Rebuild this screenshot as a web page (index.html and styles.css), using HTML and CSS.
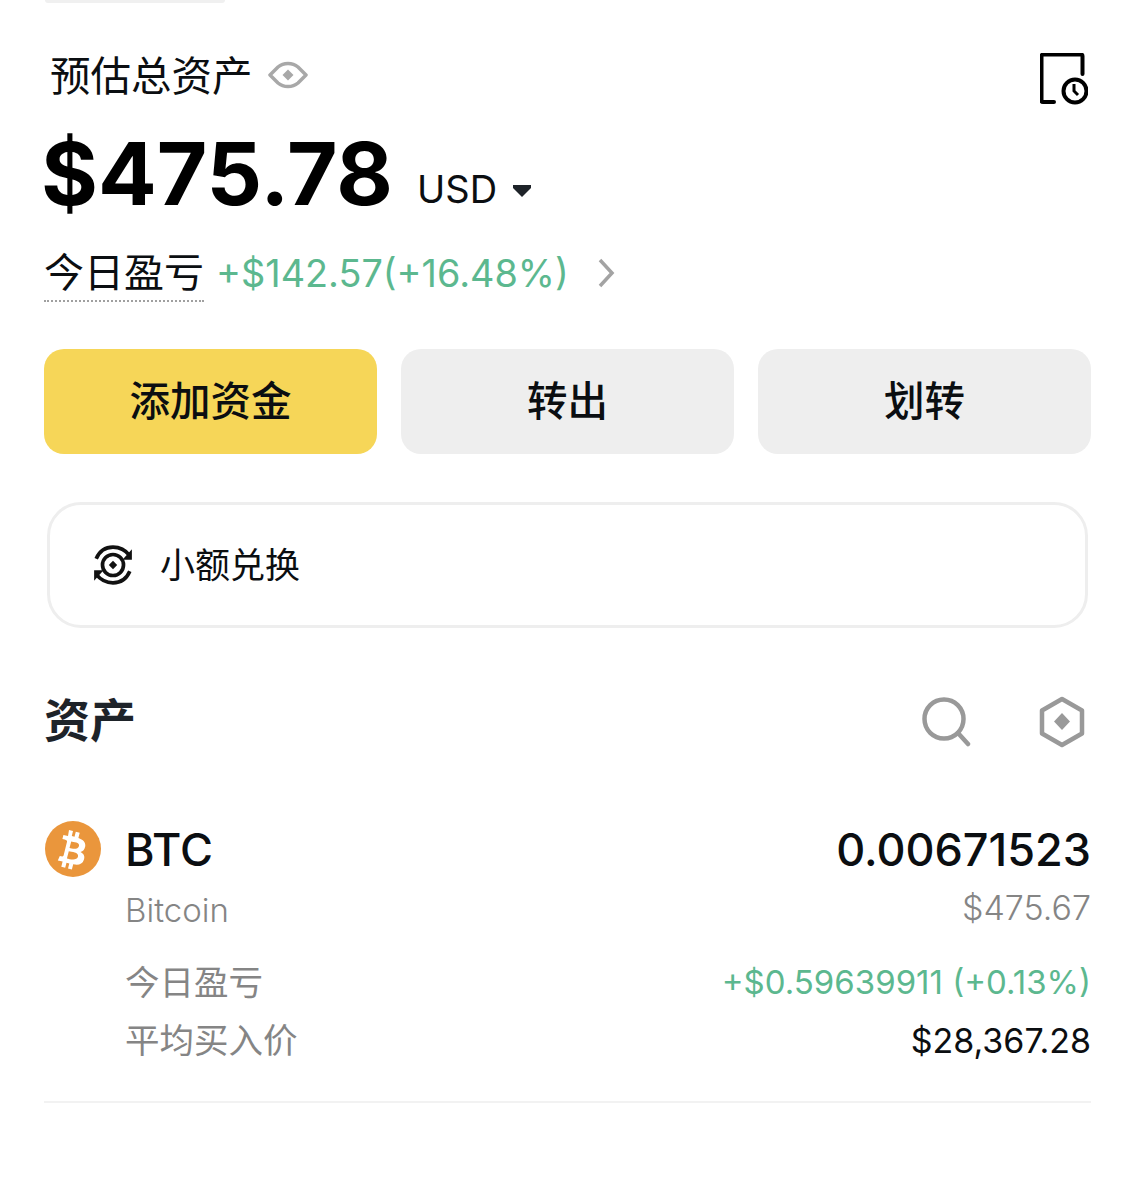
FILE: index.html
```html
<!DOCTYPE html>
<html lang="zh-CN">
<head>
    <meta charset="UTF-8">
    <title>资产</title>
    <link rel="stylesheet" href="styles.css">
</head>
<body>
    <div class="top-sliver"></div>
    <div class="total-head">
        <div class="total-label">
            <span>预估总资产</span>
            <svg class="eye" viewBox="0 0 40 28" width="40" height="28">
                <path d="M2 14 L10 6 C13 3.500 16 2.500 20 2.500 C24 2.500 27 3.500 30 6 L38 14 L30 22 C27 24.500 24 25.500 20 25.500 C16 25.500 13 24.500 10 22 Z" fill="none" stroke="#a8a8a8" stroke-width="3.500" stroke-linejoin="round"/>
                <path d="M20 8.500 L25.500 14 L20 19.500 L14.500 14 Z" fill="#a8a8a8"/>
            </svg>
        </div>
        <svg class="history" viewBox="0 0 48 52" width="48" height="52">
            <path d="M14 49 H3 a1.500 1.500 0 0 1 -1.500 -1.500 V3 a1.500 1.500 0 0 1 1.500 -1.500 H41 a1.500 1.500 0 0 1 1.500 1.500 V21" fill="none" stroke="#000" stroke-width="4" stroke-linecap="round"/>
            <circle cx="35" cy="38" r="11.500" fill="none" stroke="#000" stroke-width="4"/>
            <path d="M34 31 V38 L38 42" fill="none" stroke="#000" stroke-width="3"/>
        </svg>
    </div>
    <div class="amount-row">
        <span class="amount">$475.78</span>
        <span class="currency">USD</span>
        <svg class="caret" viewBox="0 0 20 14" width="20" height="14"><path d="M1 1 H19 V4 L10 13 L1 4 Z" fill="#1e2329"/></svg>
    </div>
    <div class="pnl-row">
        <span class="pnl-label">今日盈亏</span>
        <span class="pnl-value">+$142.57(+16.48%)</span>
        <svg class="chevron" viewBox="0 0 18 30" width="18" height="30"><path d="M3 2 L15 15 L3 28" fill="none" stroke="#a3a3a3" stroke-width="3.500"/></svg>
    </div>
    <div class="actions">
        <div class="btn btn-primary">添加资金</div>
        <div class="btn">转出</div>
        <div class="btn">划转</div>
    </div>
    <div class="swap-card">
        <svg class="swap-icon" viewBox="0 0 40 40" width="42" height="42">
            <path d="M4 14 C7 7 13 3 20 3 C27 3 32 6 36 11" fill="none" stroke="#111" stroke-width="3.500"/>
            <path d="M36 26 C33 33 27 37 20 37 C13 37 8 34 4 29" fill="none" stroke="#111" stroke-width="3.500"/>
            <path d="M38 5 V15 H29 Z" fill="#111"/>
            <path d="M2 35 V25 H11 Z" fill="#111"/>
            <circle cx="20" cy="20" r="10" fill="none" stroke="#111" stroke-width="3.500"/>
            <path d="M20 16 L24 20 L20 24 L16 20 Z" fill="#111"/>
        </svg>
        <span>小额兑换</span>
    </div>
    <div class="assets-head">
        <h2>资产</h2>
        <div class="assets-tools">
            <svg viewBox="0 0 50 50" width="50" height="50">
                <circle cx="22" cy="22" r="19.500" fill="none" stroke="#999" stroke-width="4.500"/>
                <path d="M36 36 L46 47" stroke="#999" stroke-width="4.500" stroke-linecap="round"/>
            </svg>
            <svg viewBox="0 0 48 52" width="48" height="52">
                <path d="M24 3 L44 14.500 V37.500 L24 49 L4 37.500 V14.500 Z" fill="none" stroke="#999" stroke-width="4.500" stroke-linejoin="round"/>
                <path d="M24 17 L32 25.500 L24 34 L16 25.500 Z" fill="#999"/>
            </svg>
        </div>
    </div>
    <div class="coin">
        <svg class="coin-logo" viewBox="0 0 56 56" width="56" height="56">
            <circle cx="28" cy="28" r="28" fill="#ea963c"/>
            <path fill="#fff" fill-rule="evenodd" d="M24 9 L28 10 L26.800 15 L29.500 15.700 L30.800 10.700 L34.700 11.700 L33.400 16.900 C38 18.600 41 21.200 40.200 25.600 C39.600 28.800 38 30.400 35.500 31 C38.800 32.800 40.200 35.400 38.800 39 C37.200 43.600 33.400 44.200 28.200 43.300 L26.900 48.400 L23 47.400 L24.300 42.400 L21.500 41.700 L20.200 46.800 L16.300 45.800 L17.600 40.600 L12.800 39.400 L14.800 35 C16.800 35.600 18 35.900 18.600 34.500 L22 20.800 C22.200 19.600 21.700 19 19.600 18.500 L17.400 17.900 L18.400 14 L23 15.100 Z M26.200 20.500 L24.500 27 C26.800 27.600 33 29.200 34 25 C35 21 28.500 21.100 26.200 20.500 Z M23.800 30.200 L21.900 37.400 C24.700 38.100 32 40 33 35.500 C34 31 26.600 30.900 23.800 30.200 Z"/>
        </svg>
        <div class="coin-body">
            <div class="coin-row coin-main">
                <span class="coin-symbol">BTC</span>
                <span class="coin-qty">0.00671523</span>
            </div>
            <div class="coin-row coin-sub">
                <span>Bitcoin</span>
                <span class="coin-usd">$475.67</span>
            </div>
            <div class="coin-row coin-stat coin-stat-first">
                <span class="stat-label">今日盈亏</span>
                <span class="stat-value green">+$0.59639911 (+0.13%)</span>
            </div>
            <div class="coin-row coin-stat">
                <span class="stat-label">平均买入价</span>
                <span class="stat-value">$28,367.28</span>
            </div>
        </div>
    </div>
    <div class="divider"></div>
</body>
</html>
```

FILE: styles.css
```css
:root {
    --text: #0b0e11;
    --grey: #858585;
    --green: #5cb88f;
    --line: #eeeeee;
}
html, body {
    margin: 0;
    padding: 0;
    background: #fff;
}
body {
    padding: 0 44px;
    height: 1200px;
    box-sizing: border-box;
    overflow: hidden;
    color: var(--text);
    font-family: Inter, "Noto Sans CJK SC", sans-serif;
}
.top-sliver {
    width: 180px;
    height: 3px;
    margin-left: 1px;
    background: #f0f0f0;
    border-radius: 0 0 14px 14px;
}
.total-head {
    display: flex;
    justify-content: space-between;
    padding: 50px 0 0 6px;
    height: 52px;
}
.total-label {
    display: flex;
    align-items: center;
    gap: 15px;
    height: 40px;
    font-size: 40.500px;
    font-weight: 400;
    font-family: "Noto Sans CJK SC", sans-serif;
}
.eye {
    margin-top: 4px;
}
.history {
    margin-right: 3px;
}
.amount-row {
    display: flex;
    align-items: baseline;
    height: 100px;
    margin-top: 27px;
}
.amount {
    margin-left: -3px;
    font-size: 87px;
    font-weight: 700;
    line-height: 84px;
    color: #000;
}
.currency {
    align-self: flex-start;
    margin: 34px 0 0 24px;
    font-size: 38px;
    font-weight: 400;
    line-height: 46px;
}
.caret {
    align-self: flex-start;
    margin: 52px 0 0 15px;
}
.pnl-row {
    display: flex;
    align-items: center;
    height: 56px;
    margin-top: 13px;
}
.pnl-label {
    padding-bottom: 4px;
    font-size: 40px;
    font-weight: 400;
    line-height: 52px;
    border-bottom: 2px dotted #a0a0a0;
    font-family: "Noto Sans CJK SC", sans-serif;
}
.pnl-value {
    margin-left: 12px;
    font-size: 37.800px;
    color: var(--green);
}
.chevron {
    margin-left: 28px;
}
.actions {
    display: grid;
    grid-template-columns: repeat(3, 1fr);
    gap: 24px;
    margin-top: 48px;
}
.btn {
    display: flex;
    align-items: center;
    justify-content: center;
    height: 105px;
    box-sizing: border-box;
    padding-bottom: 6px;
    background: #eeeeee;
    border-radius: 20px;
    font-size: 40.500px;
    font-weight: 500;
    font-family: "Noto Sans CJK SC", sans-serif;
}
.btn-primary {
    background: #f6d658;
}
.swap-card {
    display: flex;
    align-items: center;
    gap: 26px;
    height: 126px;
    box-sizing: border-box;
    margin: 48px 3px 0;
    padding-left: 42px;
    border: 3px solid var(--line);
    border-radius: 34px;
    font-size: 35px;
    font-weight: 400;
    font-family: "Noto Sans CJK SC", sans-serif;
}
.swap-card span {
    margin-bottom: 6px;
}
.assets-head {
    display: flex;
    justify-content: space-between;
    align-items: center;
    height: 56px;
    margin-top: 64px;
}
.assets-head h2 {
    margin: -2px 0 4px;
    font-size: 46px;
    font-weight: 700;
    color: #1e2329;
    font-family: "Noto Sans CJK SC", sans-serif;
}
.assets-tools {
    display: flex;
    align-items: center;
    gap: 66px;
    padding: 3px 5px 0 0;
}
.coin {
    display: flex;
    gap: 24px;
    margin-top: 72px;
}
.coin-logo {
    flex: none;
    margin: 1px 0 0 1px;
}
.coin-body {
    flex: 1;
}
.coin-row {
    display: flex;
    justify-content: space-between;
    align-items: center;
}
.coin-main {
    height: 58px;
    font-size: 45px;
    font-weight: 500;
}
.coin-sub {
    height: 40px;
    margin-top: 12px;
    font-size: 33px;
    font-weight: 300;
    color: var(--grey);
}
.coin-usd {
    margin-top: -6px;
    font-size: 34px;
}
.coin-stat {
    height: 58px;
    font-size: 34px;
    font-weight: 400;
}
.coin-stat-first {
    margin-top: 21px;
}
.stat-label {
    font-size: 34.500px;
    color: var(--grey);
    font-family: "Noto Sans CJK SC", sans-serif;
}
.stat-value {
    margin-top: 4px;
}
.green {
    font-size: 33px;
    color: var(--green);
}
.divider {
    height: 2px;
    margin-top: 34px;
    background: #f2f2f2;
}
```
